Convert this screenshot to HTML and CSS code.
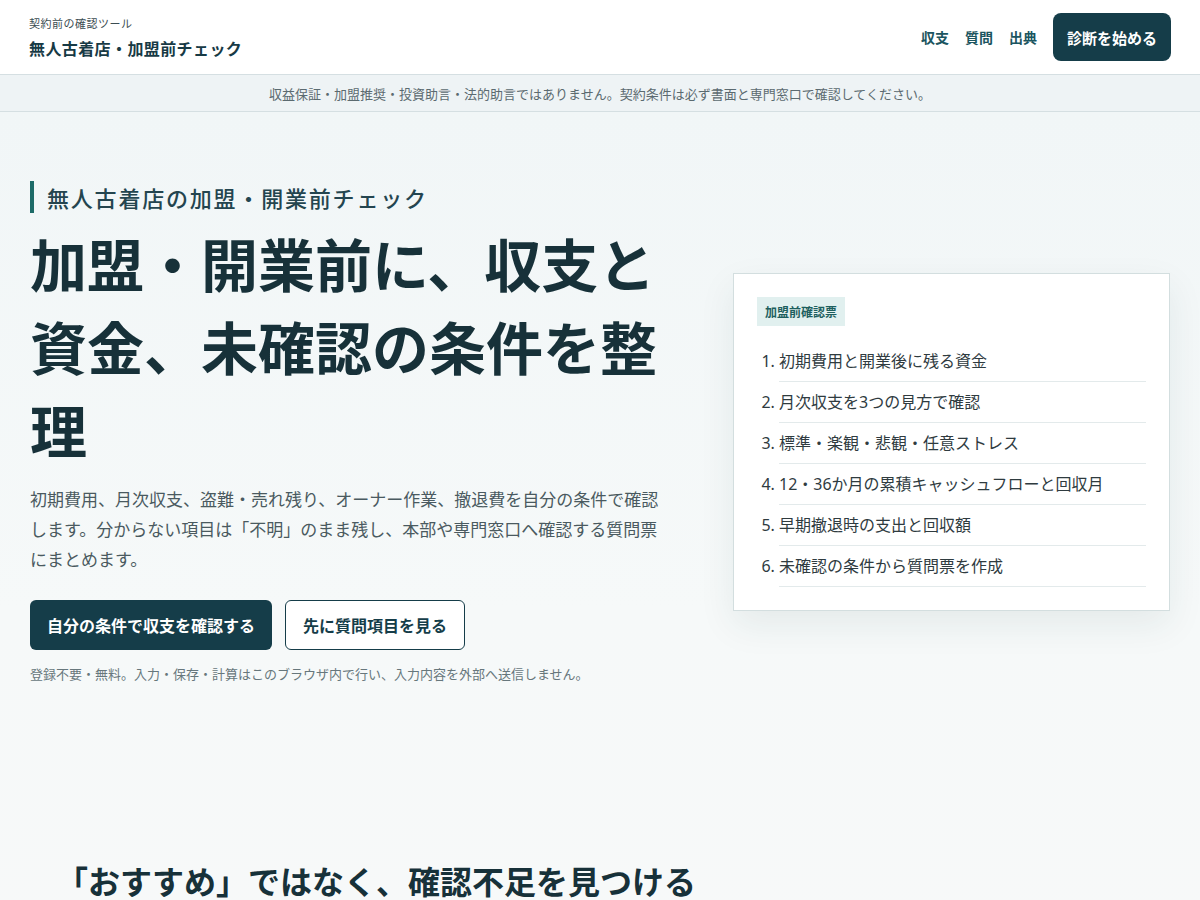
FILE: index.html
```html
<!DOCTYPE html>
<html lang="ja">
<head>
<meta charset="utf-8">
<title>無人古着店・加盟前チェック</title>
<link rel="stylesheet" href="styles.css">
</head>
<body>
<header class="site-header">
  <div class="brand">
    <div class="brand-sub">契約前の確認ツール</div>
    <div class="brand-title">無人古着店・加盟前チェック</div>
  </div>
  <nav class="nav">
    <a class="nav-link" href="#">収支</a>
    <a class="nav-link" href="#">質問</a>
    <a class="nav-link" href="#">出典</a>
    <a class="nav-cta" href="#">診断を始める</a>
  </nav>
</header>
<div class="notice">収益保証・加盟推奨・投資助言・法的助言ではありません。契約条件は必ず書面と専門窓口で確認してください。</div>
<main class="page">
  <section class="hero">
    <div class="hero-main">
      <p class="eyebrow">無人古着店の加盟・開業前チェック</p>
      <h1 class="hero-title">加盟・開業前に、収支と資金、未確認の条件を整理</h1>
      <p class="hero-lead">初期費用、月次収支、盗難・売れ残り、オーナー作業、撤退費を自分の条件で確認します。分からない項目は「不明」のまま残し、本部や専門窓口へ確認する質問票にまとめます。</p>
      <div class="hero-actions">
        <a class="btn btn-primary" href="#">自分の条件で収支を確認する</a>
        <a class="btn btn-outline" href="#">先に質問項目を見る</a>
      </div>
      <p class="hero-note">登録不要・無料。入力・保存・計算はこのブラウザ内で行い、入力内容を外部へ送信しません。</p>
    </div>
    <aside class="card">
      <span class="badge">加盟前確認票</span>
      <ol class="check-list">
        <li>初期費用と開業後に残る資金</li>
        <li>月次収支を3つの見方で確認</li>
        <li>標準・楽観・悲観・任意ストレス</li>
        <li>12・36か月の累積キャッシュフローと回収月</li>
        <li>早期撤退時の支出と回収額</li>
        <li>未確認の条件から質問票を作成</li>
      </ol>
    </aside>
  </section>
  <section class="section">
    <h2 class="section-title">「おすすめ」ではなく、確認不足を見つける</h2>
  </section>
</main>
</body>
</html>
```

FILE: styles.css
```css
* { box-sizing: border-box; }
html, body { margin: 0; padding: 0; }
body {
  font-family: "Noto Sans CJK JP", "Noto Sans", sans-serif;
  color: #173139;
  background: #f6f9f9;
}
a { text-decoration: none; }

.site-header {
  height: 75px;
  background: #ffffff;
  border-bottom: 1px solid #d5dfe2;
  display: flex;
  align-items: center;
  justify-content: space-between;
  padding: 0 29px;
}
.brand-sub {
  font-size: 11px;
  color: #3c4d52;
  line-height: 16px;
  letter-spacing: 0.5px;
}
.brand-title {
  margin-top: 6px;
  font-size: 16px;
  font-weight: 700;
  color: #173a45;
  line-height: 22px;
  letter-spacing: 0.4px;
}
.nav {
  display: flex;
  align-items: center;
  gap: 16px;
}
.nav-link {
  font-size: 14px;
  font-weight: 700;
  color: #1b5560;
}
.nav-cta {
  height: 48px;
  padding: 0 14px;
  display: flex;
  align-items: center;
  background: #153d49;
  color: #ffffff;
  font-size: 15px;
  font-weight: 700;
  border-radius: 8px;
}

.notice {
  height: 37px;
  background: #eef3f5;
  border-bottom: 1px solid #d5dfe2;
  display: flex;
  align-items: center;
  justify-content: center;
  font-size: 13px;
  color: #5b6a70;
}

.page {
  background: linear-gradient(180deg, #f1f6f7 0%, #f6f9f9 60%, #f7f9f9 100%);
}
.hero {
  display: flex;
  justify-content: space-between;
  align-items: flex-start;
  padding: 69px 30px 0 30px;
}
.hero-main {
  width: 640px;
}
.eyebrow {
  margin: 0;
  border-left: 4px solid #1d6b68;
  padding-left: 13px;
  font-size: 22px;
  line-height: 32px;
  font-weight: 500;
  color: #24454f;
  letter-spacing: 1.8px;
}
.hero-title {
  margin: 8px 0 0 0;
  font-size: 57px;
  line-height: 83px;
  font-weight: 700;
  color: #173139;
}
.hero-lead {
  margin: 14px 0 0 0;
  font-size: 17px;
  line-height: 30px;
  color: #4a5a60;
}
.hero-actions {
  margin-top: 26px;
  display: flex;
  gap: 13px;
}
.btn {
  height: 50px;
  display: flex;
  align-items: center;
  padding: 0 17px;
  border-radius: 6px;
  font-size: 16px;
  font-weight: 700;
}
.btn-primary {
  background: #153d49;
  color: #ffffff;
}
.btn-outline {
  background: #ffffff;
  color: #153d49;
  border: 1px solid #153d49;
}
.hero-note {
  margin: 14px 0 0 0;
  font-size: 13px;
  line-height: 20px;
  color: #67777c;
}

.card {
  width: 437px;
  margin-top: 92px;
  background: #ffffff;
  border: 1px solid #d3dedf;
  padding: 23px;
  box-shadow: 0 14px 34px rgba(30, 60, 70, 0.08);
}
.badge {
  display: inline-block;
  background: #e1f0ef;
  color: #1d5f5e;
  font-size: 12px;
  font-weight: 700;
  line-height: 29px;
  padding: 0 8px;
}
.check-list {
  margin: 15px 0 0 0;
  padding-left: 22px;
  font-family: "Noto Sans", "Noto Sans CJK JP", sans-serif;
}
.check-list li {
  font-size: 16px;
  line-height: 24px;
  color: #2f3b3f;
  padding: 8px 0;
  border-bottom: 1px solid #e3eaeb;
}

.section {
  padding: 173px 56px 40px;
}
.section-title {
  margin: 0;
  font-size: 32px;
  line-height: 46px;
  font-weight: 700;
  color: #173139;
}
```
